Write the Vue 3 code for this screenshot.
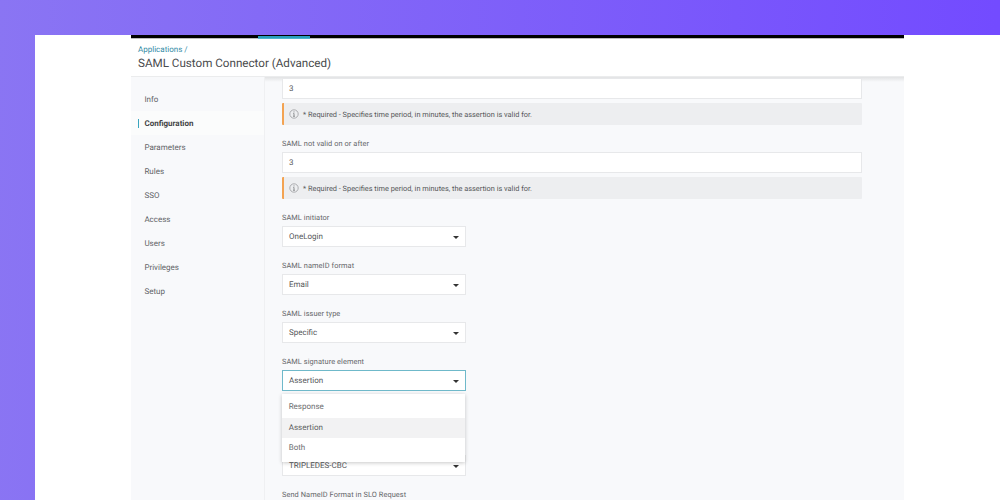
<script setup>
import {ref} from "vue";

const menu=['Info','Configuration','Parameters','Rules','SSO','Access','Users','Privileges','Setup']
const activeMenu=ref('Configuration')
const hint='* Required - Specifies time period, in minutes, the assertion is valid for.'
const periods=ref([
  {label:'',value:'3'},
  {label:'SAML not valid on or after',value:'3'},
])
const selects=ref([
  {label:'SAML initiator',value:'OneLogin'},
  {label:'SAML nameID format',value:'Email'},
  {label:'SAML issuer type',value:'Specific'},
  {label:'SAML signature element',value:'Assertion',options:['Response','Assertion','Both']},
  {label:'',value:'TRIPLEDES-CBC'},
])
const openSelect=ref(3)
function toggleSelect(index){
  openSelect.value=openSelect.value===index?-1:index
}
function pickOption(item,option){
  item.value=option
  openSelect.value=-1
}
</script>
<template>
  <div class="backdrop">
    <div class="sheet">
      <div class="app">
        <div class="topbar"><div class="topbar-tab"></div></div>
        <header class="header">
          <div class="crumb">Applications /</div>
          <h1 class="title">SAML Custom Connector (Advanced)</h1>
        </header>
        <div class="body">
          <nav class="sidebar">
            <div v-for="name in menu" :key="name"
                 class="menu-item"
                 :class="{active:name===activeMenu}"
                 @click="activeMenu=name"
            ><span>{{name}}</span></div>
          </nav>
          <main class="form">
            <div v-for="(item,index) in periods" :key="index" class="period">
              <div v-if="item.label" class="label">{{item.label}}</div>
              <div class="box wide">{{item.value}}</div>
              <div class="hint">
                <svg class="hint-icon" viewBox="0 0 10 10">
                  <circle cx="5" cy="5" r="4.2" fill="none" stroke="#909295" stroke-width="0.7"/>
                  <path d="M5 2.4v1M4.3 4.4H5v2.9M4.1 7.3h1.8" fill="none" stroke="#77797c" stroke-width="0.8"/>
                </svg>
                <span class="hint-text">{{hint}}</span>
              </div>
            </div>
            <div v-for="(item,index) in selects" :key="index" class="field">
              <div class="label">{{item.label}}</div>
              <div class="box select" :class="{open:index===openSelect}" @click="toggleSelect(index)">
                <span class="select-value">{{item.value}}</span>
                <span class="caret"></span>
              </div>
              <div v-if="item.options && index===openSelect" class="dropdown">
                <div v-for="option in item.options" :key="option"
                     class="option"
                     :class="{selected:option===item.value}"
                     @click="pickOption(item,option)"
                >{{option}}</div>
              </div>
            </div>
            <div class="label last">Send NameID Format in SLO Request</div>
          </main>
        </div>
      </div>
    </div>
  </div>
</template>
<style>
body{
  margin: 0;
  overflow: hidden;
}
</style>
<style scoped>
.backdrop{
  box-sizing: border-box;
  width: 1000px;
  height: 500px;
  padding: 35px 0 0 35px;
  overflow: hidden;
  background: linear-gradient(92deg,#8a75f3 0%,#734bff 98%);
  font-family: Roboto,"Liberation Sans",sans-serif;
  font-size: 8px;
  text-rendering: geometricPrecision;
  color: #56585a;
}
.sheet{
  height: 465px;
  padding-left: 96px;
  background-color: white;
}
.app{
  display: flex;
  flex-direction: column;
  width: 773px;
  height: 465px;
  overflow: hidden;
}
.topbar{
  height: 3px;
  padding-left: 127px;
  background-color: black;
  border-bottom: 1px solid #bcbcbc;
}
.topbar-tab{
  width: 52px;
  height: 2px;
  margin-top: 1px;
  border-bottom: 1px solid #4fb3cb;
  background-color: #2a9fbd;
}
.header{
  box-sizing: border-box;
  height: 38px;
  padding: 5px 7px 0;
  background-color: white;
  border-bottom: 1px solid #ebeced;
}
.crumb{
  line-height: 11px;
  color: #338ca6;
}
.title{
  margin: 0;
  font-size: 11.65px;
  font-weight: 400;
  line-height: 16px;
  color: #4a4b4d;
}
.body{
  display: flex;
  flex: 1;
  min-height: 0;
  background-color: #f8f9fb;
}
.sidebar{
  box-sizing: border-box;
  width: 134px;
  padding-top: 10px;
  border-right: 1px solid #eff0f2;
}
.menu-item{
  display: flex;
  align-items: center;
  height: 24px;
  padding-left: 7px;
  color: #626467;
}
.menu-item span{
  padding-left: 5.4px;
  line-height: 9px;
  border-left: 1px solid transparent;
}
.menu-item.active{
  background-color: #fbfcfc;
  font-weight: 700;
  color: #434446;
}
.menu-item.active span{
  border-left-color: #3aa5bf;
}
.form{
  flex: 1;
  padding: 1px 0 0 17px;
  background: linear-gradient(#e2e3e4,#f8f9fb 5px);
}
.period{
  margin-bottom: 9px;
}
.label{
  box-sizing: border-box;
  height: 18px;
  padding-top: 1px;
  line-height: 17px;
  font-size: 7.4px;
  letter-spacing: 0.07px;
  color: #65676a;
}
.box{
  box-sizing: border-box;
  height: 21px;
  padding: 0 6px;
  border: 1px solid #e7e8ea;
  background-color: white;
  line-height: 19px;
}
.wide{
  width: 580px;
}
.hint{
  box-sizing: border-box;
  display: flex;
  align-items: center;
  width: 580px;
  height: 22px;
  margin-top: 4px;
  padding-left: 5px;
  border-left: 2px solid #f3a352;
  border-radius: 1px;
  background-color: #edeef0;
  font-size: 7.37px;
}
.hint-icon{
  width: 10px;
  height: 10px;
  margin-right: 4px;
}
.field{
  position: relative;
  width: 184px;
  margin-bottom: 9px;
}
.field:nth-last-child(2){
  margin-top: 46px;
}
.select{
  display: flex;
  justify-content: space-between;
  align-items: center;
}
.open{
  border-color: #6fb9ca;
}
.caret{
  margin-top: 2px;
  border: 3px solid transparent;
  border-top-color: #333;
  border-bottom: 0;
}
.dropdown{
  position: absolute;
  top: 42px;
  left: 0;
  z-index: 2;
  box-sizing: border-box;
  width: 183px;
  height: 68px;
  padding: 3px 0 4px;
  background-color: white;
  box-shadow: 0 1px 4px rgba(0,0,0,0.22);
}
.option{
  height: 20.6px;
  padding-left: 6.7px;
  line-height: 20.4px;
  color: #6c6e70;
}
.selected{
  background-color: #f2f2f3;
  color: #5c5e60;
}
.last{
  margin-top: 9px;
}
</style>
